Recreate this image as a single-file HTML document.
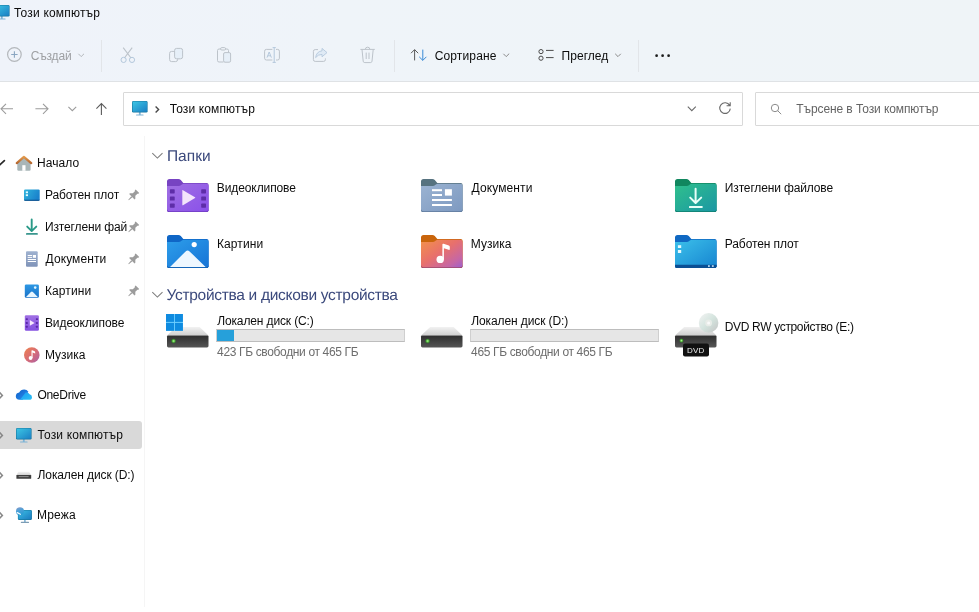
<!DOCTYPE html>
<html lang="bg">
<head>
<meta charset="utf-8">
<title>Този компютър</title>
<style>
*{box-sizing:border-box;margin:0;padding:0}
html,body{width:979px;height:612px;overflow:hidden;background:#fff}
body{position:relative;font-family:"Liberation Sans",sans-serif;font-size:12px;color:#1b1b1b}
.abs{position:absolute}
.t{position:absolute;white-space:nowrap;line-height:16px;height:16px;will-change:transform}
#top{left:0;top:0;width:979px;height:82px;background:linear-gradient(90deg,#eff3fa 0%,#eff4f9 35%,#eff4f7 100%);border-bottom:1px solid #dfe2e5}
.sep{position:absolute;width:1px;background:#e2e5e9;top:40px;height:32px}
#addr{left:123px;top:92px;width:620px;height:34px;border:1px solid #d9d9d9;border-radius:1px;background:#fff}
#search{left:755px;top:92px;width:240px;height:34px;border:1px solid #d9d9d9;border-radius:1px;background:#fff}
#side{left:0;top:136px;width:145px;height:471px;border-right:1px solid #f5f5f5}
#sel{left:0;top:421px;width:141.5px;height:27.5px;background:#d9d9d9;border-radius:0 3px 3px 0}
.bar{position:absolute;height:13px;width:189px;border:1px solid #bdbdbd;border-left-color:#cfcfcf;border-right-color:#cfcfcf;background:#e6e6e6}
.bar i{display:block;height:100%;background:#26a0da}
svg{position:absolute;overflow:visible}
</style>
</head>
<body>
<div id="top" class="abs"></div>
<div class="sep" style="left:101px"></div>
<div class="sep" style="left:394px"></div>
<div class="sep" style="left:638px"></div>
<div id="addr" class="abs"></div>
<div id="search" class="abs"></div>
<div id="side" class="abs"></div>
<div id="sel" class="abs"></div>
<div class="bar" style="left:216px;top:329px"><i style="width:17px"></i></div>
<div class="bar" style="left:470px;top:329px"><i style="width:0"></i></div>
<svg style="left:167px;top:179px" width="42" height="33" viewBox="0 0 42 33"><defs><linearGradient id="g1" x1="0" y1="0" x2="1" y2="1"><stop offset="0" stop-color="#a070e2"/><stop offset="1" stop-color="#8a50ea"/></linearGradient></defs><path d="M0 2.6Q0 0 2.6 0H11.3Q12.8 0 13.8 1.1L16.3 4H39.6Q41.6 4 41.6 6V30.4Q41.6 33 39 33H2.6Q0 33 0 30.4Z" fill="#7743c2"/><path d="M0 7H11.8Q13.2 7 14.2 6.1L15.2 5.3Q15.9 4.8 17 4.8H39.4Q41.6 4.8 41.6 7V30.4Q41.6 33 39 33H2.6Q0 33 0 30.4Z" fill="url(#g1)"/><path d="M0 30.4Q0 33 2.6 33H39Q41.6 33 41.6 30.4V29.6Q41.6 32.2 39 32.2H2.6Q0 32.2 0 29.6Z" fill="#6f3bc0"/><rect x="2.9" y="10.3" width="4.8" height="4.1" rx="0.6" fill="#5e2da8"/><rect x="2.9" y="17.5" width="4.8" height="4.1" rx="0.6" fill="#5e2da8"/><rect x="2.9" y="24.6" width="4.8" height="4.1" rx="0.6" fill="#5e2da8"/><rect x="34.2" y="10.3" width="4.8" height="4.1" rx="0.6" fill="#5e2da8"/><rect x="34.2" y="17.5" width="4.8" height="4.1" rx="0.6" fill="#5e2da8"/><rect x="34.2" y="24.6" width="4.8" height="4.1" rx="0.6" fill="#5e2da8"/><path d="M15.3 11.6Q15.3 10.8 16 11.2L28 18.2Q28.6 18.7 28 19.1L16 26.2Q15.3 26.6 15.3 25.8Z" fill="#f3e4fb"/></svg>
<svg style="left:421px;top:179px" width="42" height="33" viewBox="0 0 42 33"><defs><linearGradient id="g2" x1="0" y1="0" x2="1" y2="1"><stop offset="0" stop-color="#9bb3d2"/><stop offset="1" stop-color="#7d99c0"/></linearGradient></defs><path d="M0 2.6Q0 0 2.6 0H11.3Q12.8 0 13.8 1.1L16.3 4H39.6Q41.6 4 41.6 6V30.4Q41.6 33 39 33H2.6Q0 33 0 30.4Z" fill="#56727f"/><path d="M0 7H11.8Q13.2 7 14.2 6.1L15.2 5.3Q15.9 4.8 17 4.8H39.4Q41.6 4.8 41.6 7V30.4Q41.6 33 39 33H2.6Q0 33 0 30.4Z" fill="url(#g2)"/><path d="M0 30.4Q0 33 2.6 33H39Q41.6 33 41.6 30.4V29.6Q41.6 32.2 39 32.2H2.6Q0 32.2 0 29.6Z" fill="#5f7a9c"/><rect x="11" y="10.2" width="10" height="2" fill="#fff"/><rect x="11" y="15" width="10" height="2" fill="#fff"/><rect x="23.9" y="10.2" width="7" height="6.4" fill="#fff"/><rect x="11" y="20" width="19.9" height="2" fill="#fff"/><rect x="11" y="25" width="19.9" height="2" fill="#fff"/></svg>
<svg style="left:675px;top:179px" width="42" height="33" viewBox="0 0 42 33"><defs><linearGradient id="g3" x1="0" y1="0" x2="1" y2="1"><stop offset="0" stop-color="#30c08c"/><stop offset="1" stop-color="#1a96a4"/></linearGradient></defs><path d="M0 2.6Q0 0 2.6 0H11.3Q12.8 0 13.8 1.1L16.3 4H39.6Q41.6 4 41.6 6V30.4Q41.6 33 39 33H2.6Q0 33 0 30.4Z" fill="#11875f"/><path d="M0 7H11.8Q13.2 7 14.2 6.1L15.2 5.3Q15.9 4.8 17 4.8H39.4Q41.6 4.8 41.6 7V30.4Q41.6 33 39 33H2.6Q0 33 0 30.4Z" fill="url(#g3)"/><path d="M0 30.4Q0 33 2.6 33H39Q41.6 33 41.6 30.4V29.6Q41.6 32.2 39 32.2H2.6Q0 32.2 0 29.6Z" fill="#0f7e6e"/><path d="M20.6 9.8V23.6M15.2 18.6L20.6 24L26.2 18.6" fill="none" stroke="#e8fff8" stroke-width="2" stroke-linecap="round" stroke-linejoin="round"/><rect x="14" y="27.1" width="13.6" height="1.8" rx="0.5" fill="#e8fff8"/></svg>
<svg style="left:167px;top:235px" width="42" height="33" viewBox="0 0 42 33"><defs><linearGradient id="g4" x1="0" y1="0" x2="1" y2="1"><stop offset="0" stop-color="#2d9eea"/><stop offset="1" stop-color="#1673d6"/></linearGradient></defs><path d="M0 2.6Q0 0 2.6 0H11.3Q12.8 0 13.8 1.1L16.3 4H39.6Q41.6 4 41.6 6V30.4Q41.6 33 39 33H2.6Q0 33 0 30.4Z" fill="#0f66c6"/><path d="M0 7H11.8Q13.2 7 14.2 6.1L15.2 5.3Q15.9 4.8 17 4.8H39.4Q41.6 4.8 41.6 7V30.4Q41.6 33 39 33H2.6Q0 33 0 30.4Z" fill="url(#g4)"/><path d="M0 30.4Q0 33 2.6 33H39Q41.6 33 41.6 30.4V29.6Q41.6 32.2 39 32.2H2.6Q0 32.2 0 29.6Z" fill="#0f5cb0"/><circle cx="27.2" cy="9.6" r="2.6" fill="#fff"/><path d="M3 32L18.6 16.4Q20.6 14.4 22.6 16.4L38.6 32Z" fill="#eef7ff"/><path d="M2.6 33H39Q40.6 33 41.2 32H0.4Q1 33 2.6 33Z" fill="#1565b8"/></svg>
<svg style="left:421px;top:235px" width="42" height="33" viewBox="0 0 42 33"><defs><linearGradient id="g5" x1="0" y1="0" x2="1" y2="1"><stop offset="0" stop-color="#f2924a"/><stop offset="0.45" stop-color="#e8706c"/><stop offset="0.8" stop-color="#c566a6"/><stop offset="1" stop-color="#9a5fd0"/></linearGradient></defs><path d="M0 2.6Q0 0 2.6 0H11.3Q12.8 0 13.8 1.1L16.3 4H39.6Q41.6 4 41.6 6V30.4Q41.6 33 39 33H2.6Q0 33 0 30.4Z" fill="#c9650c"/><path d="M0 7H11.8Q13.2 7 14.2 6.1L15.2 5.3Q15.9 4.8 17 4.8H39.4Q41.6 4.8 41.6 7V30.4Q41.6 33 39 33H2.6Q0 33 0 30.4Z" fill="url(#g5)"/><path d="M0 30.4Q0 33 2.6 33H39Q41.6 33 41.6 30.4V29.6Q41.6 32.2 39 32.2H2.6Q0 32.2 0 29.6Z" fill="#9c4a6a"/><circle cx="19.2" cy="24.4" r="3.7" fill="#fff"/><path d="M21.4 24.4V9.6Q21.4 8.4 22.6 8.8L27.8 10.6Q28.8 11 28.8 12V14Q28.8 15.2 27.6 14.8L22.9 13.2V24.4Z" fill="#fff"/></svg>
<svg style="left:675px;top:235px" width="42" height="33" viewBox="0 0 42 33"><defs><linearGradient id="g6" x1="0" y1="0" x2="1" y2="1"><stop offset="0" stop-color="#3cc0ea"/><stop offset="1" stop-color="#1684d0"/></linearGradient></defs><path d="M0 2.6Q0 0 2.6 0H11.3Q12.8 0 13.8 1.1L16.3 4H39.6Q41.6 4 41.6 6V30.4Q41.6 33 39 33H2.6Q0 33 0 30.4Z" fill="#1068c2"/><path d="M0 7H11.8Q13.2 7 14.2 6.1L15.2 5.3Q15.9 4.8 17 4.8H39.4Q41.6 4.8 41.6 7V30.4Q41.6 33 39 33H2.6Q0 33 0 30.4Z" fill="url(#g6)"/><path d="M0 30.4Q0 33 2.6 33H39Q41.6 33 41.6 30.4V29.6Q41.6 32.2 39 32.2H2.6Q0 32.2 0 29.6Z" fill="#0b4f94"/><rect x="2.9" y="10.2" width="3.3" height="2.8" fill="#e4faff"/><rect x="2.9" y="15" width="3.3" height="3" fill="#e4faff"/><path d="M0 29.8H41.6V30.4Q41.6 33 39 33H2.6Q0 33 0 30.4Z" fill="#0b4f94"/><rect x="33" y="30.3" width="1.8" height="1.5" fill="#d8f0ff"/><rect x="36.9" y="30.3" width="1.8" height="1.5" fill="#d8f0ff"/></svg>
<svg style="left:167px;top:326.8px" width="42" height="21" viewBox="0 0 42 21"><defs><linearGradient id="g7" x1="0" y1="0" x2="0" y2="1"><stop offset="0" stop-color="#f2f2f2"/><stop offset="1" stop-color="#cfcfcf"/></linearGradient><linearGradient id="g8" x1="0" y1="0" x2="0" y2="1"><stop offset="0" stop-color="#2e2e2e"/><stop offset="1" stop-color="#555"/></linearGradient><radialGradient id="g7r"><stop offset="0" stop-color="#b6f0a0"/><stop offset="0.45" stop-color="#58c040"/><stop offset="1" stop-color="#1f6a1f" stop-opacity="0.2"/></radialGradient></defs><path d="M9.2 0H32.6L41.5 8.6H0Z" fill="url(#g7)"/><path d="M0 9.4Q0 8.4 1 8.4H40.5Q41.5 8.4 41.5 9.4V19Q41.5 20.4 40 20.4H1.5Q0 20.4 0 19Z" fill="url(#g8)"/><circle cx="6.6" cy="14" r="2.7" fill="url(#g7r)"/></svg>
<svg style="left:165.9px;top:314.2px" width="17" height="17" viewBox="0 0 17 17"><rect x="0" y="0" width="16.9" height="16.8" fill="#6fd0ff"/><rect x="0" y="0" width="8" height="7.9" fill="#0f8be0"/><rect x="8.9" y="0" width="8" height="7.9" fill="#0f8be0"/><rect x="0" y="8.9" width="8" height="7.9" fill="#0f8be0"/><rect x="8.9" y="8.9" width="8" height="7.9" fill="#0f8be0"/></svg>
<svg style="left:421px;top:326.8px" width="42" height="21" viewBox="0 0 42 21"><defs><linearGradient id="g9" x1="0" y1="0" x2="0" y2="1"><stop offset="0" stop-color="#f2f2f2"/><stop offset="1" stop-color="#cfcfcf"/></linearGradient><linearGradient id="g10" x1="0" y1="0" x2="0" y2="1"><stop offset="0" stop-color="#2e2e2e"/><stop offset="1" stop-color="#555"/></linearGradient><radialGradient id="g9r"><stop offset="0" stop-color="#b6f0a0"/><stop offset="0.45" stop-color="#58c040"/><stop offset="1" stop-color="#1f6a1f" stop-opacity="0.2"/></radialGradient></defs><path d="M9.2 0H32.6L41.5 8.6H0Z" fill="url(#g9)"/><path d="M0 9.4Q0 8.4 1 8.4H40.5Q41.5 8.4 41.5 9.4V19Q41.5 20.4 40 20.4H1.5Q0 20.4 0 19Z" fill="url(#g10)"/><circle cx="6.6" cy="14" r="2.7" fill="url(#g9r)"/></svg>
<svg style="left:675px;top:313.9px" width="42" height="43" viewBox="0 0 42 43"><defs><linearGradient id="g11" x1="0" y1="0" x2="0" y2="1"><stop offset="0" stop-color="#f0f0f0"/><stop offset="1" stop-color="#cfcfcf"/></linearGradient><linearGradient id="g12" x1="0" y1="0" x2="0" y2="1"><stop offset="0" stop-color="#2e2e2e"/><stop offset="1" stop-color="#565656"/></linearGradient><linearGradient id="g13" x1="0" y1="0" x2="1" y2="1"><stop offset="0" stop-color="#f4f4f4"/><stop offset="0.5" stop-color="#d4e4de"/><stop offset="1" stop-color="#c4c4c4"/></linearGradient><radialGradient id="g11r"><stop offset="0" stop-color="#b6f0a0"/><stop offset="0.45" stop-color="#58c040"/><stop offset="1" stop-color="#1f6a1f" stop-opacity="0.2"/></radialGradient></defs><path d="M9.2 13H32.6L41.5 21.4H0Z" fill="url(#g11)"/><path d="M0 22.4Q0 21.4 1 21.4H40.5Q41.5 21.4 41.5 22.4V32Q41.5 33.4 40 33.4H1.5Q0 33.4 0 32Z" fill="url(#g12)"/><circle cx="33.6" cy="8.9" r="9.8" fill="url(#g13)"/><circle cx="33.6" cy="8.9" r="3.4" fill="#e8ece8"/><circle cx="33.6" cy="8.9" r="1.5" fill="#fafafa"/><circle cx="6.4" cy="26.6" r="2.4" fill="url(#g11r)"/><rect x="8" y="29.4" width="26" height="13.2" rx="2" fill="#111"/></svg>
<svg style="left:-6.2px;top:5.2px" width="16" height="15" viewBox="0 0 16 15"><defs><linearGradient id="g14" x1="0" y1="0" x2="1" y2="1"><stop offset="0" stop-color="#3cc6e4"/><stop offset="1" stop-color="#1b7fc4"/></linearGradient></defs><rect x="6.9" y="11" width="1.8" height="3" fill="#7fb4d6"/><rect x="4" y="13.4" width="7.6" height="1.2" rx="0.5" fill="#7fb4d6"/><rect x="0" y="0" width="15.6" height="11.6" rx="1.4" fill="#17779f"/><rect x="0.6" y="0.6" width="14.4" height="10.2" rx="0.9" fill="url(#g14)"/></svg>
<svg style="left:132.3px;top:101.2px" width="16" height="15" viewBox="0 0 16 15"><defs><linearGradient id="g15" x1="0" y1="0" x2="1" y2="1"><stop offset="0" stop-color="#3cc6e4"/><stop offset="1" stop-color="#1b7fc4"/></linearGradient></defs><rect x="6.9" y="11" width="1.8" height="3" fill="#7fb4d6"/><rect x="4" y="13.4" width="7.6" height="1.2" rx="0.5" fill="#7fb4d6"/><rect x="0" y="0" width="15.6" height="11.6" rx="1.4" fill="#17779f"/><rect x="0.6" y="0.6" width="14.4" height="10.2" rx="0.9" fill="url(#g15)"/></svg>
<svg style="left:16.1px;top:427.9px" width="16" height="15" viewBox="0 0 16 15"><defs><linearGradient id="g16" x1="0" y1="0" x2="1" y2="1"><stop offset="0" stop-color="#3cc6e4"/><stop offset="1" stop-color="#1b7fc4"/></linearGradient></defs><rect x="6.9" y="11" width="1.8" height="3" fill="#7fb4d6"/><rect x="4" y="13.4" width="7.6" height="1.2" rx="0.5" fill="#7fb4d6"/><rect x="0" y="0" width="15.6" height="11.6" rx="1.4" fill="#17779f"/><rect x="0.6" y="0.6" width="14.4" height="10.2" rx="0.9" fill="url(#g16)"/></svg>
<svg style="left:0;top:0" width="979" height="612" viewBox="0 0 979 612"><circle cx="14.4" cy="54.5" r="6.8" fill="none" stroke="#b4b8bc" stroke-width="1.2"/><path d="M11.2 54.5H17.6M14.4 51.3V57.7" stroke="#8aa6c2" stroke-width="1.1" fill="none"/><path d="M78.4 53.8L81.2 56.6L84 53.8" stroke="#b4b8bc" stroke-width="1" fill="none"/><path d="M123.2 47.6L131 58M132.2 47.6L124.4 58" stroke="#bcc3ca" stroke-width="1.1" fill="none"/><circle cx="123.6" cy="59.9" r="2.6" fill="none" stroke="#b4c8dc" stroke-width="1"/><circle cx="132" cy="59.9" r="2.6" fill="none" stroke="#b4c8dc" stroke-width="1"/><rect x="169.6" y="51.4" width="8" height="10.2" rx="2" fill="none" stroke="#bcc3ca" stroke-width="1"/><rect x="174.6" y="48.4" width="8" height="10.4" rx="2" fill="#e6eff8" stroke="#bcc3ca" stroke-width="1"/><path d="M221 49H219Q217.5 49 217.5 50.5V60.5Q217.5 62 219 62H223.5M225 49H227Q228.5 49 228.5 50.5V52.5" fill="none" stroke="#bcc3ca" stroke-width="1"/><rect x="220.6" y="47.6" width="5" height="2.4" rx="1.2" fill="none" stroke="#bcc3ca" stroke-width="1"/><rect x="223.6" y="52.6" width="7" height="9.6" rx="1.4" fill="#e6eff8" stroke="#bcc3ca" stroke-width="1"/><path d="M272.4 49.4H266.4Q264.6 49.4 264.6 51.2V58.2Q264.6 60 266.4 60H272.4M276 49.4H277.6Q279.4 49.4 279.4 51.2V58.2Q279.4 60 277.6 60H276" fill="none" stroke="#bcc3ca" stroke-width="1"/><path d="M274.2 47.6V62.4M272.6 47.6H275.8M272.6 62.4H275.8" stroke="#b4c8dc" stroke-width="1" fill="none"/><path d="M267 57.6L269.2 52L271.4 57.6M267.8 55.8H270.6" stroke="#b4c8dc" stroke-width="1" fill="none"/><path d="M318 49.6H315.2Q313.4 49.6 313.4 51.4V59.6Q313.4 61.4 315.2 61.4H323.6Q325.4 61.4 325.4 59.6V58.4" fill="none" stroke="#bcc3ca" stroke-width="1"/><path d="M322 48.4L327 52.6L322 56.8V54.4Q318 54.4 315.6 57.6Q316.4 51.6 322 50.8Z" fill="#dfeaf5" stroke="#b4c8dc" stroke-width="0.9" stroke-linejoin="round"/><path d="M360.4 49.4H374.8M362 49.6L363.2 61.2Q363.4 62.6 364.8 62.6H370.4Q371.8 62.6 372 61.2L373.2 49.6M365.4 49.2Q365.4 47.2 367.6 47.2Q369.8 47.2 369.8 49.2M366.2 52.6V59M369 52.6V59" fill="none" stroke="#bcc3ca" stroke-width="1"/><path d="M414.6 60.4V49.8M411 53.2L414.6 49.6L418.2 53.2" fill="none" stroke="#5a5a5a" stroke-width="1"/><path d="M422.8 49.6V60.2M419.2 56.8L422.8 60.4L426.4 56.8" fill="none" stroke="#3a8ad6" stroke-width="1"/><path d="M503.4 53.8L506.2 56.6L509 53.8" stroke="#8a8a8a" stroke-width="1" fill="none"/><circle cx="541" cy="51.6" r="2.1" fill="none" stroke="#4a4a4a" stroke-width="1"/><circle cx="541" cy="58.2" r="2.1" fill="none" stroke="#4a4a4a" stroke-width="1"/><path d="M546 50.4H553.6M546 57.6H553.6" stroke="#4a4a4a" stroke-width="1" fill="none"/><path d="M615.2 53.8L618 56.6L620.8 53.8" stroke="#8a8a8a" stroke-width="1" fill="none"/><circle cx="656.6" cy="55.7" r="1.35" fill="#1b1b1b"/><circle cx="662.6" cy="55.7" r="1.35" fill="#1b1b1b"/><circle cx="668.6" cy="55.7" r="1.35" fill="#1b1b1b"/><path d="M13 108.8H1.2M6 103.8L1 108.8L6 113.8" fill="none" stroke="#9c9c9c" stroke-width="1.1"/><path d="M35.4 108.8H47.6M43 103.8L48 108.8L43 113.8" fill="none" stroke="#9c9c9c" stroke-width="1.1"/><path d="M68.4 106.8L72.3 110.7L76.2 106.8" fill="none" stroke="#9c9c9c" stroke-width="1.1"/><path d="M101.4 115V103.8M96.4 108.6L101.4 103.6L106.4 108.6" fill="none" stroke="#5c5c5c" stroke-width="1.1"/><path d="M155.6 106.4L158.6 109.4L155.6 112.4" fill="none" stroke="#484848" stroke-width="1.4"/><path d="M687.8 106.6L691.8 110.6L695.8 106.6" fill="none" stroke="#6a6a6a" stroke-width="1.1"/><path d="M729.6 105.4A5.3 5.3 0 1 0 730.3 108.6M730.2 102.2V105.8H726.6" fill="none" stroke="#6a6a6a" stroke-width="1.1"/><circle cx="775" cy="108" r="3.7" fill="none" stroke="#8c8c8c" stroke-width="1"/><path d="M777.7 110.7L781.2 114.2" stroke="#8c8c8c" stroke-width="1" fill="none"/><path d="M152.3 153.1L157.4 158.1L162.5 153.1" fill="none" stroke="#7c7c7c" stroke-width="1.05"/><path d="M152.3 292.1L157.4 297.1L162.5 292.1" fill="none" stroke="#7c7c7c" stroke-width="1.05"/><path d="M-0.5 165.2L4.4 160.6" stroke="#2a2a2a" stroke-width="1.7" stroke-linecap="round" fill="none"/><path d="M-0.6 392.2L2.4 395.4L-0.6 398.59999999999997" stroke="#878787" stroke-width="1.5" fill="none"/><path d="M-0.6 432.2L2.4 435.4L-0.6 438.59999999999997" stroke="#878787" stroke-width="1.5" fill="none"/><path d="M-0.6 472.2L2.4 475.4L-0.6 478.59999999999997" stroke="#878787" stroke-width="1.5" fill="none"/><path d="M-0.6 512.1999999999999L2.4 515.4L-0.6 518.6" stroke="#878787" stroke-width="1.5" fill="none"/><g transform="translate(133.2 195.4) rotate(45)" fill="#9c9c9c"><path d="M-2.5 -6H2.5V-4.8L1.8 -4.2V-1.2L3.8 0.8V1.9H-3.8V0.8L-1.8 -1.2V-4.2L-2.5 -4.8Z"/><path d="M-0.8 1.9H0.8L0.3 6.6H-0.3Z"/></g><g transform="translate(133.2 227.4) rotate(45)" fill="#9c9c9c"><path d="M-2.5 -6H2.5V-4.8L1.8 -4.2V-1.2L3.8 0.8V1.9H-3.8V0.8L-1.8 -1.2V-4.2L-2.5 -4.8Z"/><path d="M-0.8 1.9H0.8L0.3 6.6H-0.3Z"/></g><g transform="translate(133.2 259.4) rotate(45)" fill="#9c9c9c"><path d="M-2.5 -6H2.5V-4.8L1.8 -4.2V-1.2L3.8 0.8V1.9H-3.8V0.8L-1.8 -1.2V-4.2L-2.5 -4.8Z"/><path d="M-0.8 1.9H0.8L0.3 6.6H-0.3Z"/></g><g transform="translate(133.2 291.4) rotate(45)" fill="#9c9c9c"><path d="M-2.5 -6H2.5V-4.8L1.8 -4.2V-1.2L3.8 0.8V1.9H-3.8V0.8L-1.8 -1.2V-4.2L-2.5 -4.8Z"/><path d="M-0.8 1.9H0.8L0.3 6.6H-0.3Z"/></g></svg>
<svg style="left:0;top:0" width="979" height="612" viewBox="0 0 979 612"><defs><linearGradient id="g17" gradientUnits="userSpaceOnUse" x1="0" y1="156" x2="0" y2="164"><stop offset="0" stop-color="#e8a050"/><stop offset="1" stop-color="#b0602a"/></linearGradient></defs><path d="M17.3 163V169.6Q17.3 170.8 18.5 170.8H29.4Q30.6 170.8 30.6 169.6V163L23.9 157.4Z" fill="#a9b6b8"/><rect x="22.3" y="165.2" width="3.2" height="5.6" fill="#fff"/><path d="M16.8 163.1L23.9 156.9L31.2 163.1" fill="none" stroke="url(#g17)" stroke-width="2.3" stroke-linecap="round" stroke-linejoin="round"/><defs><linearGradient id="g18" x1="0" y1="0" x2="1" y2="0.4"><stop offset="0" stop-color="#30b4dc"/><stop offset="1" stop-color="#1a82cc"/></linearGradient></defs><rect x="24" y="189.4" width="15.7" height="11.4" rx="1.2" fill="url(#g18)"/><path d="M24 199.8H39.7Q39.7 200.8 38.5 200.8H25.2Q24 200.8 24 199.8Z" fill="#0a4a86"/><rect x="25.8" y="191.4" width="2.2" height="1.8" fill="#dffcff"/><rect x="25.8" y="194.3" width="2.2" height="1.8" fill="#dffcff"/><path d="M31.7 219.4V230.6M27.2 226.6L31.7 231.1L36.3 226.6" fill="none" stroke="#2a9a88" stroke-width="1.9" stroke-linecap="round" stroke-linejoin="round"/><rect x="26" y="233.1" width="11.8" height="1.7" rx="0.4" fill="#3a968e"/><defs><linearGradient id="g19" x1="0" y1="0" x2="0" y2="1"><stop offset="0" stop-color="#9fb2d0"/><stop offset="1" stop-color="#7f93b8"/></linearGradient></defs><rect x="26" y="251.2" width="11.7" height="15.6" rx="1" fill="url(#g19)"/><rect x="27.7" y="255" width="4.4" height="1" fill="#fff"/><rect x="27.7" y="256.9" width="4.4" height="1" fill="#fff"/><rect x="32.9" y="255" width="3.1" height="2.8" fill="#fff"/><rect x="27.7" y="259" width="8.3" height="1" fill="#fff"/><rect x="27.7" y="261" width="8.3" height="1" fill="#fff"/><defs><linearGradient id="g20" x1="0" y1="0" x2="0" y2="1"><stop offset="0" stop-color="#2d98e4"/><stop offset="1" stop-color="#1a72c8"/></linearGradient></defs><rect x="24.8" y="284.4" width="14.1" height="13.4" rx="1.4" fill="url(#g20)"/><circle cx="35.2" cy="287.6" r="1.3" fill="#dff4ff"/><path d="M26 297L30.9 292Q31.9 291 32.9 292L37.8 297Z" fill="#e8f6ff"/><defs><linearGradient id="g21" x1="0" y1="0" x2="0" y2="1"><stop offset="0" stop-color="#a070e4"/><stop offset="1" stop-color="#8450e0"/></linearGradient></defs><rect x="24.8" y="315.2" width="14.1" height="15.6" rx="1.4" fill="url(#g21)"/><rect x="25.8" y="318.2" width="2" height="1.9" rx="0.4" fill="#5a28a8"/><rect x="25.8" y="322" width="2" height="1.9" rx="0.4" fill="#5a28a8"/><rect x="25.8" y="325.8" width="2" height="1.9" rx="0.4" fill="#5a28a8"/><rect x="35.9" y="318.2" width="2" height="1.9" rx="0.4" fill="#5a28a8"/><rect x="35.9" y="322" width="2" height="1.9" rx="0.4" fill="#5a28a8"/><rect x="35.9" y="325.8" width="2" height="1.9" rx="0.4" fill="#5a28a8"/><path d="M29.8 320L34.6 322.9L29.8 325.8Z" fill="#f6e8fc"/><defs><linearGradient id="g22" x1="0" y1="0" x2="1" y2="1"><stop offset="0" stop-color="#ee824c"/><stop offset="0.5" stop-color="#d86c74"/><stop offset="1" stop-color="#aa60a8"/></linearGradient></defs><circle cx="31.8" cy="355" r="7.8" fill="url(#g22)"/><circle cx="30.6" cy="358" r="1.9" fill="#fff"/><path d="M31.5 358V350.8Q31.5 350 32.3 350.3L34.6 351.2Q35.2 351.5 35.2 352.2V353.4L32.6 352.5V358Z" fill="#fff"/><defs><linearGradient id="g23" x1="0" y1="0" x2="1" y2="1"><stop offset="0" stop-color="#0f5fc8"/><stop offset="1" stop-color="#2a90f0"/></linearGradient><linearGradient id="g24" x1="0" y1="0" x2="1" y2="1"><stop offset="0" stop-color="#1a9cf4"/><stop offset="1" stop-color="#2cc0f4"/></linearGradient></defs><path d="M19.4 399.8Q15.8 399.6 15.8 396.2Q16 393 19.2 392.6Q20.6 389.4 24.2 389.4Q27 389.4 28.4 391.8L22.6 399.8Z" fill="url(#g23)"/><path d="M20 399.8L25.6 392.6Q28.2 391.8 29.6 394.2Q32 394.6 32 397.2Q32 399.8 29.2 399.8Z" fill="url(#g24)"/><defs><linearGradient id="g25" x1="0" y1="0" x2="0" y2="1"><stop offset="0" stop-color="#f4f4f4"/><stop offset="1" stop-color="#cfcfcf"/></linearGradient></defs><path d="M18.4 471.8H29.2L31.2 475.2H16.4Z" fill="url(#g25)"/><rect x="16.4" y="475" width="14.8" height="3.7" rx="0.5" fill="#3e3e3e"/><rect x="18.6" y="476.2" width="10" height="0.9" fill="#9a9a9a"/><defs><linearGradient id="g26" x1="0" y1="0" x2="1" y2="1"><stop offset="0" stop-color="#3cc0e4"/><stop offset="1" stop-color="#1b7ac0"/></linearGradient><linearGradient id="g26b" x1="0" y1="0" x2="0.3" y2="1"><stop offset="0" stop-color="#8c9cc8"/><stop offset="0.5" stop-color="#4aa0d8"/><stop offset="1" stop-color="#2a9cd4"/></linearGradient></defs><rect x="24.1" y="519.6" width="1.6" height="2.6" fill="#7fb4d6"/><rect x="20.8" y="521.8" width="8.2" height="1.1" rx="0.5" fill="#7c9cb4"/><rect x="17.9" y="510" width="14" height="10" rx="1.2" fill="#17779f"/><rect x="18.4" y="510.5" width="13" height="8.8" rx="0.8" fill="url(#g26)"/><circle cx="20" cy="511.3" r="4" fill="url(#g26b)"/><path d="M17.3 512.6L20.4 514.3" stroke="#f4fbff" stroke-width="1.2" stroke-linecap="round"/></svg>

<span class="t" style="left:13px;padding-left:1.00px;top:5px;color:#0c0c0c;letter-spacing:0.187px">Този компютър</span>
<span class="t" style="left:30px;padding-left:0.75px;top:48px;color:#9d9fa2;letter-spacing:-0.183px">Създай</span>
<span class="t" style="left:434px;padding-left:0.65px;top:48px;color:#0c0c0c;letter-spacing:0.148px">Сортиране</span>
<span class="t" style="left:561px;padding-left:0.50px;top:48px;color:#0c0c0c;letter-spacing:0.053px">Преглед</span>
<span class="t" style="left:169px;padding-left:0.70px;top:101px;color:#0c0c0c;letter-spacing:0.119px">Този компютър</span>
<span class="t" style="left:796px;padding-left:0.30px;top:101px;color:#646464;letter-spacing:-0.093px">Търсене в Този компютър</span>
<span class="t" style="left:37px;padding-left:0.00px;top:155px;color:#0c0c0c;letter-spacing:0.067px">Начало</span>
<span class="t" style="left:44px;padding-left:0.90px;top:187px;color:#0c0c0c;letter-spacing:-0.073px">Работен плот</span>
<span class="t" style="left:44px;padding-left:0.90px;top:219px;color:#0c0c0c;letter-spacing:-0.125px">Изтеглени фай</span>
<span class="t" style="left:45px;padding-left:0.60px;top:251px;color:#0c0c0c;letter-spacing:0.084px">Документи</span>
<span class="t" style="left:44px;padding-left:0.90px;top:283px;color:#0c0c0c;letter-spacing:0.122px">Картини</span>
<span class="t" style="left:44px;padding-left:0.90px;top:315px;color:#0c0c0c;letter-spacing:-0.066px">Видеоклипове</span>
<span class="t" style="left:44px;padding-left:0.90px;top:347px;color:#0c0c0c;letter-spacing:0.011px">Музика</span>
<span class="t" style="left:37px;padding-left:0.40px;top:387px;color:#0c0c0c;letter-spacing:-0.266px">OneDrive</span>
<span class="t" style="left:37px;padding-left:0.40px;top:427px;color:#0c0c0c;letter-spacing:0.153px">Този компютър</span>
<span class="t" style="left:37px;padding-left:0.60px;top:467px;color:#0c0c0c;letter-spacing:-0.116px">Локален диск (D:)</span>
<span class="t" style="left:37px;padding-left:0.00px;top:507px;color:#0c0c0c;letter-spacing:0.179px">Мрежа</span>
<span class="t" style="left:166px;padding-left:0.92px;top:147px;color:#3b497c;letter-spacing:0.030px;font-size:15.5px;line-height:20px;height:20px;text-rendering:geometricPrecision">Папки</span>
<span class="t" style="left:216px;padding-left:0.80px;top:180px;color:#0c0c0c;letter-spacing:-0.102px">Видеоклипове</span>
<span class="t" style="left:471px;padding-left:0.50px;top:180px;color:#0c0c0c;letter-spacing:0.125px">Документи</span>
<span class="t" style="left:724px;padding-left:0.80px;top:180px;color:#0c0c0c;letter-spacing:-0.141px">Изтеглени файлове</span>
<span class="t" style="left:216px;padding-left:0.90px;top:236px;color:#0c0c0c;letter-spacing:0.122px">Картини</span>
<span class="t" style="left:470px;padding-left:0.80px;top:236px;color:#0c0c0c;letter-spacing:0.011px">Музика</span>
<span class="t" style="left:724px;padding-left:0.80px;top:236px;color:#0c0c0c;letter-spacing:-0.102px">Работен плот</span>
<span class="t" style="left:166px;padding-left:0.52px;top:286px;color:#3b497c;letter-spacing:-0.300px;font-size:15.5px;line-height:20px;height:20px;text-rendering:geometricPrecision">Устройства и дискови устройства</span>
<span class="t" style="left:217px;padding-left:0.20px;top:313px;color:#0c0c0c;letter-spacing:-0.131px">Локален диск (C:)</span>
<span class="t" style="left:217px;padding-left:0.08px;top:344px;color:#6d6d6d;letter-spacing:-0.351px">423 ГБ свободни от 465 ГБ</span>
<span class="t" style="left:471px;padding-left:0.20px;top:313px;color:#0c0c0c;letter-spacing:-0.099px">Локален диск (D:)</span>
<span class="t" style="left:471px;padding-left:0.08px;top:344px;color:#6d6d6d;letter-spacing:-0.351px">465 ГБ свободни от 465 ГБ</span>
<span class="t" style="left:724px;padding-left:0.80px;top:319px;color:#0c0c0c;letter-spacing:-0.340px">DVD RW устройство (E:)</span>
<span class="t" style="left:686px;padding-left:0.93px;top:342.5px;color:#ececec;letter-spacing:0.287px;font-size:8px;line-height:16px;height:16px">DVD</span>
</body>
</html>
